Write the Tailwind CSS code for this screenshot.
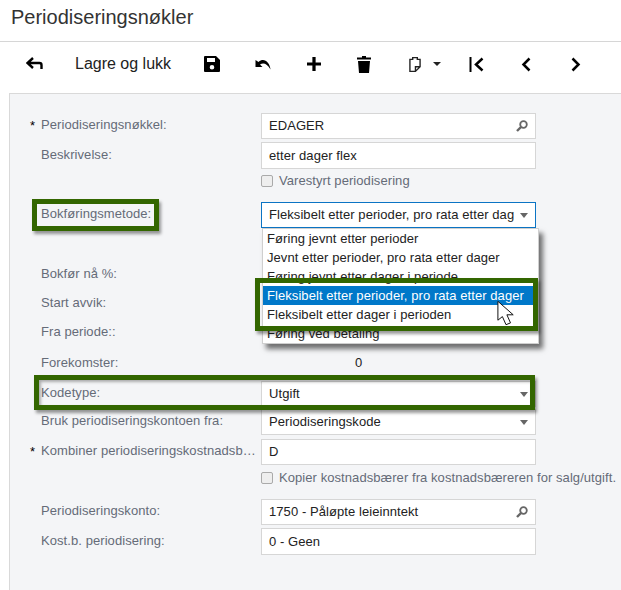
<!DOCTYPE html>
<html lang="nb">
  <head>
    <meta charset="UTF-8" />
    <title>Periodiseringsnøkler</title>
    <script src="https://cdn.jsdelivr.net/npm/@tailwindcss/browser@4"></script>
  </head>
  <body class="bg-white overflow-hidden font-['Liberation_Sans',Arial,sans-serif]">
    <div class="relative w-[621px] h-[590px] overflow-hidden">
      <header class="h-[42px] border-b border-[#d6d6d6] pl-[11px] pt-[5px] text-[20px] leading-[24px] text-[#333]">Periodiseringsnøkler</header>

      <!-- toolbar -->
      <nav class="h-[51px] pb-[7px] flex items-center relative text-black">
        <svg class="ml-[26px] w-[17px] h-[14px]" viewBox="0 0 17 14"><path d="M7 1 1.500 6l5.500 5M2 6h11.500a2 2 0 0 1 2 2v4" fill="none" stroke="#000" stroke-width="2.400"/></svg>
        <span class="ml-[32px] w-[97px] text-[16px] whitespace-nowrap text-[#222]">Lagre og lukk</span>
        <svg class="ml-[32px] w-[16px] h-[16px]" viewBox="0 0 16 16"><path fill-rule="evenodd" d="M1 0h11l4 4v11a1 1 0 0 1-1 1H1a1 1 0 0 1-1-1V1a1 1 0 0 1 1-1Zm2 2v4h8V2Zm5 7a2.300 2.300 0 1 0 0 4.600A2.300 2.300 0 0 0 8 9Z" fill="#000"/></svg>
        <svg class="ml-[35px] w-[17px] h-[11px]" viewBox="0 0 16 11"><path d="M0 1v7h7L4.500 5.500C7.500 3.500 11.500 4 15 10.500 14.500 5 11 1 7.500 1 6 1 4.500 1.500 3 3Z" fill="#000"/></svg>
        <svg class="ml-[35px] w-[14px] h-[14px]" viewBox="0 0 13 13"><path d="M6.500 0v13M0 6.500h13" stroke="#000" stroke-width="3"/></svg>
        <svg class="ml-[36px] w-[14px] h-[17px]" viewBox="0 0 14 17"><path d="M5 0h4v1.500h5v2H0v-2h5ZM1 5h12l-1 12H2Z" fill="#000"/></svg>
        <svg class="ml-[38px] w-[12px] h-[17px]" viewBox="0 0 13 17"><path d="M1 3h3V1h5v2h3v8l-5 5H1Zm6 13v-5h5" fill="none" stroke="#222" stroke-width="1.500"/></svg>
        <svg class="ml-[12px] w-[8px] h-[4px]" viewBox="0 0 8 4"><path d="M0 0h8L4 4Z" fill="#222"/></svg>
        <svg class="ml-[28px] w-[15px] h-[15px]" viewBox="0 0 15 15"><path d="M1.500 0v15" stroke="#000" stroke-width="2"/><path d="M13.500 1.500 7 7.500l6.500 6" fill="none" stroke="#000" stroke-width="2.500"/></svg>
        <svg class="ml-[37px] w-[10px] h-[15px]" viewBox="0 0 10 15"><path d="M8.500 1.500 2.500 7.500l6 6" fill="none" stroke="#000" stroke-width="2.500"/></svg>
        <svg class="ml-[40px] w-[10px] h-[15px]" viewBox="0 0 10 15"><path d="M1.500 1.500 7.500 7.500l-6 6" fill="none" stroke="#000" stroke-width="2.500"/></svg>
      </nav>

      <!-- form panel -->
      <main class="relative ml-[9px] h-[497px] border-t border-l border-[#d9d9d9] bg-[#f4f5f7] pl-[20px] pt-[19px] text-[13px] tracking-[0.07px] text-[#656b78]">
        <div class="flex h-[26px] items-center">
          <span class="w-[11px] text-black">*</span><span class="w-[220px] pb-[2px]">Periodiseringsnøkkel:</span>
          <div class="w-[275px] h-full bg-white border border-[#d6d6d6] flex items-center justify-between pl-[7px] pr-[7px] text-[#222]">
            <span>EDAGER</span>
            <svg class="w-[12px] h-[12px]" viewBox="0 0 12 12"><circle cx="7.500" cy="4.500" r="3.300" fill="none" stroke="#666" stroke-width="1.800"/><path d="M5 7 1 11" stroke="#666" stroke-width="2.400"/></svg>
          </div>
        </div>
        <div class="flex h-[27px] mt-[3px] items-center">
          <span class="w-[11px]"></span><span class="w-[220px] pb-[2px]">Beskrivelse:</span>
          <div class="w-[275px] h-full bg-white border border-[#d6d6d6] flex items-center pl-[7px] text-[#222]">etter dager flex</div>
        </div>
        <div class="flex h-[12px] mt-[6px] ml-[231px] items-center gap-[6px]">
          <span class="w-[12px] h-[12px] shrink-0 rounded-[2px] border border-[#aaa] bg-[#eee]"></span><span>Varestyrt periodisering</span>
        </div>
        <div class="flex h-[26px] mt-[15px] items-center">
          <span class="w-[11px]"></span><span class="w-[220px] pb-[2px]">Bokføringsmetode:</span>
          <div class="w-[275px] h-full bg-white border border-[#0b74c4] flex items-center justify-between pl-[7px] pr-[7px] text-[#222]">
            <span class="whitespace-nowrap">Fleksibelt etter perioder, pro rata etter dag</span>
            <span class="w-0 h-0 border-x-[4px] border-x-transparent border-t-[5px] border-t-[#666]"></span>
          </div>
        </div>
        <div class="flex h-[26px] mt-[33px] items-center pl-[11px]">Bokfør nå %:</div>
        <div class="flex h-[26px] mt-[3px] items-center pl-[11px]">Start avvik:</div>
        <div class="flex h-[26px] mt-[3px] items-center pl-[11px]">Fra periode::</div>
        <div class="flex h-[26px] mt-[5px] items-center pl-[11px]"><span class="w-[314px]">Forekomster:</span><span class="text-[#222]">0</span></div>
        <div class="flex h-[26px] mt-[5px] items-center">
          <span class="w-[11px]"></span><span class="w-[220px] pb-[2px]">Kodetype:</span>
          <div class="w-[275px] h-full bg-white border border-[#d6d6d6] flex items-center justify-between pl-[7px] pr-[7px] text-[#222]">
            <span>Utgift</span><span class="w-0 h-0 border-x-[4px] border-x-transparent border-t-[5px] border-t-[#666]"></span>
          </div>
        </div>
        <div class="flex h-[26px] mt-[2px] items-center">
          <span class="w-[11px]"></span><span class="w-[220px] pb-[2px]">Bruk periodiseringskontoen fra:</span>
          <div class="w-[275px] h-full bg-white border border-[#d6d6d6] flex items-center justify-between pl-[7px] pr-[7px] text-[#222]">
            <span>Periodiseringskode</span><span class="w-0 h-0 border-x-[4px] border-x-transparent border-t-[5px] border-t-[#666]"></span>
          </div>
        </div>
        <div class="flex h-[26px] mt-[4px] items-center">
          <span class="w-[11px] text-black">*</span><span class="w-[220px] pb-[2px] whitespace-nowrap">Kombiner periodiseringskostnadsb…</span>
          <div class="w-[275px] h-full bg-white border border-[#d6d6d6] flex items-center pl-[7px] text-[#222]">D</div>
        </div>
        <div class="flex h-[12px] mt-[7px] ml-[231px] items-center gap-[6px] whitespace-nowrap">
          <span class="w-[12px] h-[12px] shrink-0 rounded-[2px] border border-[#aaa] bg-[#eee]"></span><span>Kopier kostnadsbærer fra kostnadsbæreren for salg/utgift.</span>
        </div>
        <div class="flex h-[26px] mt-[15px] items-center">
          <span class="w-[11px]"></span><span class="w-[220px] pb-[2px]">Periodiseringskonto:</span>
          <div class="w-[275px] h-full bg-white border border-[#d6d6d6] flex items-center justify-between pl-[7px] pr-[7px] text-[#222]">
            <span>1750 - Påløpte leieinntekt</span>
            <svg class="w-[12px] h-[12px]" viewBox="0 0 12 12"><circle cx="7.500" cy="4.500" r="3.300" fill="none" stroke="#666" stroke-width="1.800"/><path d="M5 7 1 11" stroke="#666" stroke-width="2.400"/></svg>
          </div>
        </div>
        <div class="flex h-[27px] mt-[3px] items-center">
          <span class="w-[11px]"></span><span class="w-[220px] pb-[2px]">Kost.b. periodisering:</span>
          <div class="w-[275px] h-full bg-white border border-[#d6d6d6] flex items-center pl-[7px] text-[#222]">0 - Geen</div>
        </div>

        <!-- open dropdown -->
        <ul class="absolute left-[252px] top-[134px] w-[277px] h-[116px] bg-white border border-[#cfcfcf] shadow-[4px_5px_5px_rgba(0,0,0,0.55)] text-[#222] whitespace-nowrap">
          <li class="h-[19px] leading-[19px] pl-[4px]">Føring jevnt etter perioder</li>
          <li class="h-[19px] leading-[19px] pl-[4px]">Jevnt etter perioder, pro rata etter dager</li>
          <li class="h-[19px] leading-[19px] pl-[4px]">Føring jevnt etter dager i periode</li>
          <li class="h-[19px] leading-[19px] pl-[4px] bg-[#0078c9] text-white">Fleksibelt etter perioder, pro rata etter dager</li>
          <li class="h-[19px] leading-[19px] pl-[4px]">Fleksibelt etter dager i perioden</li>
          <li class="h-[19px] leading-[19px] pl-[4px]">Føring ved betaling</li>
        </ul>

        <!-- green highlight boxes -->
        <div class="absolute left-[22px] top-[105px] w-[127px] h-[32px] border-[5px] border-[#336600] shadow-[2px_3px_3px_rgba(0,0,0,0.4)]"></div>
        <div class="absolute left-[245px] top-[184px] w-[283px] h-[53px] border-[5px] border-[#336600] shadow-[2px_3px_3px_rgba(0,0,0,0.4)]"></div>
        <div class="absolute left-[24px] top-[281px] w-[501px] h-[35px] border-[5px] border-[#336600] shadow-[2px_3px_3px_rgba(0,0,0,0.4),inset_2px_2px_3px_rgba(0,0,0,0.3)]"></div>

        <!-- mouse pointer -->
        <svg class="absolute left-[487px] top-[206px] w-[18px] h-[26px]" viewBox="0 0 20 28"><path d="M1 1v21l5-4 4 9 5-2-4-9h7Z" fill="#fff" stroke="#111" stroke-width="1.100"/></svg>
      </main>
    </div>
  </body>
</html>
